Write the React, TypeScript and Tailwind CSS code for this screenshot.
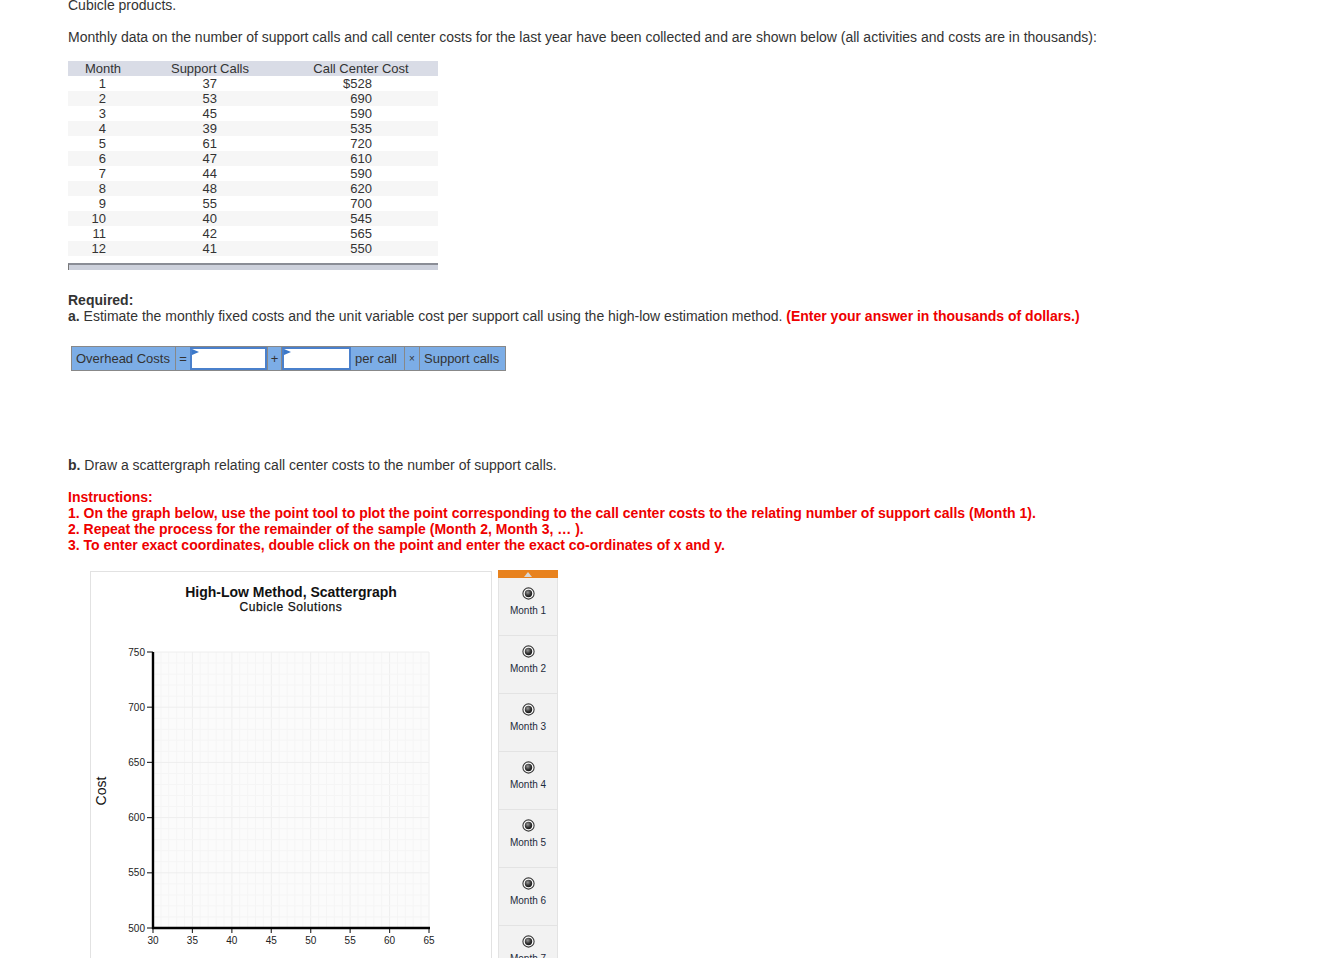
import React from "react";

const rows: [number, number, string][] = [
  [1, 37, "$528"],
  [2, 53, "690"],
  [3, 45, "590"],
  [4, 39, "535"],
  [5, 61, "720"],
  [6, 47, "610"],
  [7, 44, "590"],
  [8, 48, "620"],
  [9, 55, "700"],
  [10, 40, "545"],
  [11, 42, "565"],
  [12, 41, "550"],
];

function Flag() {
  return (
    <svg className="absolute left-0 top-0" width="8" height="8" viewBox="0 0 8 8">
      <path d="M0 0 L7 3 L0 6 Z" fill="#3b78c9" />
    </svg>
  );
}

function Radio() {
  return (
    <svg width="13" height="13" viewBox="0 0 13 13">
      <defs>
        <radialGradient id="rg" cx="0.4" cy="0.35" r="0.7">
          <stop offset="0" stopColor="#9a9a9a" />
          <stop offset="0.6" stopColor="#333" />
          <stop offset="1" stopColor="#111" />
        </radialGradient>
      </defs>
      <circle cx="6.5" cy="6.5" r="5.6" fill="#fff" stroke="#3a3a3a" strokeWidth="1.1" />
      <circle cx="6.5" cy="6.5" r="3.7" fill="url(#rg)" />
    </svg>
  );
}

function Chart() {
  const x = (v: number) => 62 + (v - 30) * (276 / 35);
  const y = (v: number) => 313 - (v - 500) * (276 / 250);
  const vx: number[] = [];
  for (let i = 30; i <= 65; i++) vx.push(i);
  const hy: number[] = [];
  for (let i = 500; i <= 750; i += 10) hy.push(i);
  return (
    <svg width="400" height="380" viewBox="0 0 400 380" className="block">
      <rect x={62} y={37} width={276} height={276} fill="#fbfbfb" />
      {vx.map((v) => (
        <line
          key={"v" + v}
          x1={x(v)}
          x2={x(v)}
          y1={37}
          y2={313}
          stroke={v % 5 === 0 ? "#eeeeee" : "#f5f5f5"}
          strokeWidth={1}
        />
      ))}
      {hy.map((v) => (
        <line
          key={"h" + v}
          x1={62}
          x2={338}
          y1={y(v)}
          y2={y(v)}
          stroke={v % 50 === 0 ? "#eeeeee" : "#f5f5f5"}
          strokeWidth={1}
        />
      ))}
      {[500, 550, 600, 650, 700, 750].map((v) => (
        <g key={"yl" + v}>
          <line x1={56} x2={62} y1={y(v)} y2={y(v)} stroke="#333" strokeWidth={1.2} />
          <text
            x={54}
            y={y(v) + 3.5}
            textAnchor="end"
            fontSize="10"
            fill="#222"
            fontFamily="'Liberation Sans', Arial, sans-serif"
          >
            {v}
          </text>
        </g>
      ))}
      {[30, 35, 40, 45, 50, 55, 60, 65].map((v) => (
        <g key={"xl" + v}>
          <line x1={x(v)} x2={x(v)} y1={313} y2={318} stroke="#333" strokeWidth={1.2} />
          <text
            x={x(v)}
            y={328.5}
            textAnchor="middle"
            fontSize="10"
            fill="#222"
            fontFamily="'Liberation Sans', Arial, sans-serif"
          >
            {v}
          </text>
        </g>
      ))}
      <line x1={62} x2={62} y1={37} y2={314} stroke="#000" strokeWidth={2.4} />
      <line x1={61} x2={339} y1={313} y2={313} stroke="#000" strokeWidth={2.4} />
      <text
        x={10}
        y={176}
        transform="rotate(-90 10 176)"
        textAnchor="middle"
        dominantBaseline="central"
        fontSize="14"
        fill="#111"
        fontFamily="'Liberation Sans', Arial, sans-serif"
      >
        Cost
      </text>
    </svg>
  );
}

export default function App() {
  return (
    <div
      className="relative h-[958px] w-[1341px] overflow-hidden bg-white pl-[68px] text-[14px] leading-[16px] text-[#333]"
      style={{ fontFamily: "'Liberation Sans', Arial, Helvetica, sans-serif" }}
    >
      <p className="mt-[-3px]">Cubicle products.</p>
      <p className="mt-[16px]">
        Monthly data on the number of support calls and call center costs for the last year have been collected and are shown below (all activities and costs are in thousands):
      </p>

      <div className="mt-[16px] w-[370px] text-[13px] leading-[15px] text-[#333]">
        <div className="flex h-[15px] bg-[#d9dce6]">
          <div className="w-[68px] pl-[2px] text-center">Month</div>
          <div className="w-[148px] text-center">Support Calls</div>
          <div className="w-[154px] text-center">Call Center Cost</div>
        </div>
        {rows.map(([m, s, c], i) => (
          <div key={m} className={"flex h-[15px] " + (i % 2 === 1 ? "bg-[#f6f6f6]" : "bg-white")}>
            <div className="w-[68px] pr-[30px] text-right">{m}</div>
            <div className="w-[148px] pr-[67px] text-right">{s}</div>
            <div className="w-[154px] pr-[66px] text-right">{c}</div>
          </div>
        ))}
        <div className="mt-[7px] h-[7px] border-l border-t-2 border-l-[#777] border-t-[#8a8d96] bg-[#cdd1dc]" />
      </div>

      <p className="mt-[22px] font-bold">Required:</p>
      <p>
        <span className="font-bold">a.</span> Estimate the monthly fixed costs and the unit variable cost per support call using the high-low estimation method.{" "}
        <span className="font-bold text-[#ee0000]">(Enter your answer in thousands of dollars.)</span>
      </p>

      <div className="ml-[3px] mt-[22px] flex h-[25px] w-fit whitespace-nowrap border border-[#888] bg-[#7cade6] text-[13px] leading-[23px] text-[#333]">
        <div className="w-[104px] shrink-0 border-r border-[#888] pl-[4px]">Overhead Costs</div>
        <div className="w-[14px] shrink-0 text-center">=</div>
        <div className="relative w-[77px] shrink-0 border-2 border-[#4a80cc] bg-white">
          <Flag />
        </div>
        <div className="w-[15px] shrink-0 border-x border-[#888] text-center">+</div>
        <div className="relative w-[69px] shrink-0 border-2 border-[#4a80cc] bg-white">
          <Flag />
        </div>
        <div className="w-[54px] shrink-0 border-r border-[#888] pl-[4px]">per call</div>
        <div className="w-[15px] shrink-0 border-r border-[#888] text-center text-[10px]">×</div>
        <div className="w-[85px] shrink-0 pl-[4px]">Support calls</div>
      </div>

      <p className="mt-[86px]">
        <span className="font-bold">b.</span> Draw a scattergraph relating call center costs to the number of support calls.
      </p>

      <div className="mt-[16px] font-bold text-[#ee0000]">
        <p>Instructions:</p>
        <p>
          1. On the graph below, use the point tool to plot the point corresponding to the call center costs to the relating number of support calls (Month 1).
        </p>
        <p>2. Repeat the process for the remainder of the sample (Month 2, Month 3, … ).</p>
        <p>3. To enter exact coordinates, double click on the point and enter the exact co-ordinates of x and y.</p>
      </div>

      <div className="ml-[22px] mt-[17px] flex items-start gap-[6px]">
        <div className="mt-[1px] h-[420px] w-[402px] border border-[#e2e2e2] bg-white">
          <div className="pt-[12px] text-center">
            <div className="text-[14px] font-bold leading-[16px] text-[#111]">High-Low Method, Scattergraph</div>
            <div className="text-[12px] leading-[14px] tracking-[0.6px] text-[#111] [-webkit-text-stroke:0.25px_#111]">
              Cubicle Solutions
            </div>
          </div>
          <div className="mt-[1px]">
            <Chart />
          </div>
        </div>

        <div className="w-[60px]">
          <div className="flex h-[8px] items-center justify-center bg-[#e8821e]">
            <svg width="8" height="5" viewBox="0 0 8 5">
              <path d="M0 5 L4 0 L8 5 Z" fill="#d8d8d8" />
            </svg>
          </div>
          <div className="border-x border-[#e3e3e3] bg-[#f2f2f2]">
            {[1, 2, 3, 4, 5, 6, 7].map((m) => (
              <div key={m} className="flex h-[58px] flex-col items-center border-b border-[#e3e3e3] pt-[8.5px]">
                <Radio />
                <div className="mt-[5.5px] text-[10px] leading-[12px] text-[#1d2b3c]">Month {m}</div>
              </div>
            ))}
          </div>
        </div>
      </div>
    </div>
  );
}
